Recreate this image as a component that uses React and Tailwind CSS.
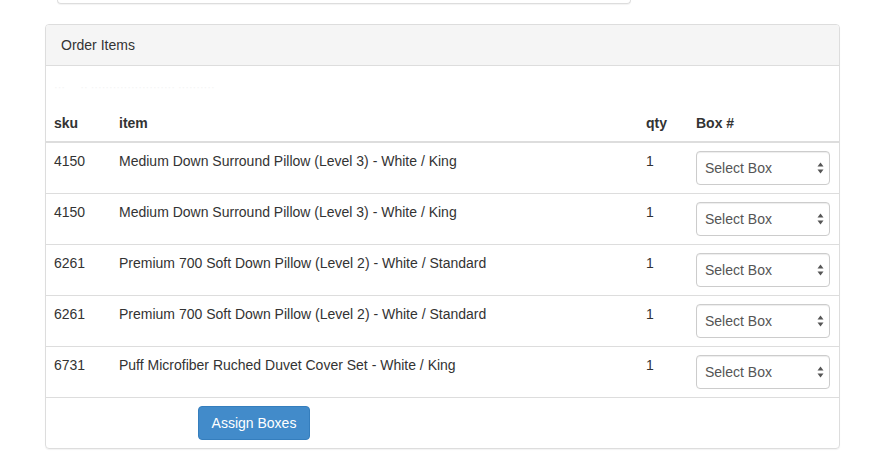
import React, { useState } from "react";

const items = [
  { sku: "4150", name: "Medium Down Surround Pillow (Level 3) - White / King", qty: 1 },
  { sku: "4150", name: "Medium Down Surround Pillow (Level 3) - White / King", qty: 1 },
  { sku: "6261", name: "Premium 700 Soft Down Pillow (Level 2) - White / Standard", qty: 1 },
  { sku: "6261", name: "Premium 700 Soft Down Pillow (Level 2) - White / Standard", qty: 1 },
  { sku: "6731", name: "Puff Microfiber Ruched Duvet Cover Set - White / King", qty: 1 },
];

const BoxSelect = ({ value, onChange }) => (
  <div className="relative w-[134px] h-[34px]">
    <select
      value={value}
      onChange={onChange}
      className="appearance-none w-full h-full border border-[#cccccc] rounded-[4px] bg-white pl-[8px] pr-6 text-[14px] text-[#555555] shadow-[inset_0_1px_1px_rgba(0,0,0,0.075)] outline-none"
    >
      <option value="">Select Box</option>
      <option value="1">Box 1</option>
      <option value="2">Box 2</option>
    </select>
    <svg
      className="absolute right-[6px] top-[11px] pointer-events-none"
      width="7"
      height="12"
      viewBox="0 0 7 12"
    >
      <path d="M3.5 0.5 L6.5 4.5 L0.5 4.5 Z" fill="#555" />
      <path d="M3.5 11.5 L6.5 7.5 L0.5 7.5 Z" fill="#555" />
    </svg>
  </div>
);

const App = () => {
  const [boxes, setBoxes] = useState(items.map(() => ""));

  const handleChange = (index) => (e) => {
    const next = [...boxes];
    next[index] = e.target.value;
    setBoxes(next);
  };

  return (
    <div className="min-h-screen bg-white text-[14px] text-[#333333] font-['Liberation_Sans',Arial,sans-serif]">
      <div className="ml-[57px] w-[574px] h-[4px] border border-t-0 border-[#dddddd] rounded-b-[4px] shadow-[0_1px_1px_rgba(0,0,0,0.05)]" />

      <div className="mt-[20px] ml-[45px] w-[795px] border border-[#dddddd] rounded-[4px] shadow-[0_1px_1px_rgba(0,0,0,0.05)]">
        <div className="bg-[#f5f5f5] border-b border-[#dddddd] px-[15px] py-[10px] leading-[20px] rounded-t-[3px]">
          Order Items
        </div>

        <div className="h-[39px] px-[8px] pt-[14px] text-[11px] leading-[14px] text-[#f4f4f4]">
          ··· &nbsp;&nbsp;&nbsp; ·· ······················· ··········
        </div>

        <table className="w-full table-fixed border-collapse">
          <thead>
            <tr className="border-b-2 border-[#dddddd] text-left">
              <th className="w-[65px] p-[8px] leading-[20px] font-bold">sku</th>
              <th className="w-[527px] p-[8px] leading-[20px] font-bold">item</th>
              <th className="w-[50px] p-[8px] leading-[20px] font-bold">qty</th>
              <th className="p-[8px] leading-[20px] font-bold">Box #</th>
            </tr>
          </thead>
          <tbody>
            {items.map((item, index) => (
              <tr key={index} className="border-b border-[#dddddd] align-top">
                <td className="p-[8px] leading-[20px]">{item.sku}</td>
                <td className="p-[8px] leading-[20px]">{item.name}</td>
                <td className="p-[8px] leading-[20px]">{item.qty}</td>
                <td className="p-[8px] leading-[20px]">
                  <BoxSelect value={boxes[index]} onChange={handleChange(index)} />
                </td>
              </tr>
            ))}
          </tbody>
        </table>

        <div className="pt-[8px] pb-[8px] pl-[152px]">
          <button
            type="button"
            className="h-[34px] w-[112px] rounded-[4px] border border-[#357ebd] bg-[#428bca] text-white text-[14px] leading-[20px]"
          >
            Assign Boxes
          </button>
        </div>
      </div>
    </div>
  );
};

export default App;
